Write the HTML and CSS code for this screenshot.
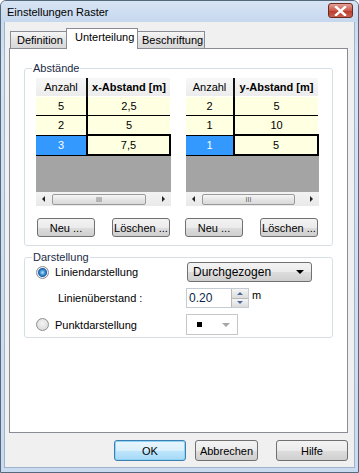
FILE: index.html
```html
<!DOCTYPE html>
<html lang="de">
<head>
    <meta charset="UTF-8">
    <title>Einstellungen Raster</title>
    <link rel="stylesheet" href="styles.css">
</head>
<body>
    <div class="window">
        <div class="titlebar">
            <span class="title">Einstellungen Raster</span>
            <span class="close">
                <svg width="13" height="10" viewBox="0 0 13 10">
                    <path d="M2 1 L11 9 M11 1 L2 9" stroke="#fff" stroke-width="2.4" stroke-linecap="square"/>
                </svg>
            </span>
        </div>

        <div class="client">
            <div class="tabs">
                <div class="tab t-def">Definition</div>
                <div class="tab active">Unterteilung</div>
                <div class="tab t-bes">Beschriftung</div>
            </div>

            <div class="panel">
                <fieldset class="group">
                    <legend>Abstände</legend>
                    <div class="twin">
                        <div class="sheetbox left">
                            <table class="sheet">
                                <tr><th class="c-n">Anzahl</th><th class="c-v">x-Abstand [m]</th></tr>
                                <tr><td class="c-n">5</td><td class="c-v">2,5</td></tr>
                                <tr><td class="c-n">2</td><td class="c-v">5</td></tr>
                                <tr class="last"><td class="c-n cur">3</td><td class="c-v focus">7,5</td></tr>
                            </table>
                            <div class="empty"></div>
                            <div class="hscroll">
                                <span class="arr-l"></span>
                                <span class="thumb"><span class="grip">III</span></span>
                                <span class="arr-r"></span>
                            </div>
                            <div class="btnrow">
                                <button class="btn b-neu">Neu ...</button>
                                <button class="btn b-del">Löschen ...</button>
                            </div>
                        </div>

                        <div class="sheetbox right">
                            <table class="sheet">
                                <tr><th class="c-n">Anzahl</th><th class="c-v">y-Abstand [m]</th></tr>
                                <tr><td class="c-n">2</td><td class="c-v">5</td></tr>
                                <tr><td class="c-n">1</td><td class="c-v">10</td></tr>
                                <tr class="last"><td class="c-n cur">1</td><td class="c-v focus">5</td></tr>
                            </table>
                            <div class="empty"></div>
                            <div class="hscroll">
                                <span class="arr-l"></span>
                                <span class="thumb"><span class="grip">III</span></span>
                                <span class="arr-r"></span>
                            </div>
                            <div class="btnrow">
                                <button class="btn b-neu">Neu ...</button>
                                <button class="btn b-del">Löschen ...</button>
                            </div>
                        </div>
                    </div>
                </fieldset>

                <fieldset class="group g2">
                    <legend>Darstellung</legend>
                    <div class="opts">
                        <label class="radio"><span class="dot on"></span>Liniendarstellung</label>
                        <div class="combo">
                            <span>Durchgezogen</span>
                            <span class="down"></span>
                        </div>

                        <span class="sublabel">Linienüberstand :</span>
                        <div class="spinrow">
                            <div class="spin">
                                <span class="spin-val">0.20</span>
                                <span class="spin-btns">
                                    <span class="sb up"></span>
                                    <span class="sb dn"></span>
                                </span>
                            </div>
                            <span class="unit">m</span>
                        </div>

                        <label class="radio"><span class="dot"></span>Punktdarstellung</label>
                        <div class="mini">
                            <span class="sq"></span>
                            <span class="down grey"></span>
                        </div>
                    </div>
                </fieldset>
            </div>

            <div class="footer">
                <button class="btn big ok">OK</button>
                <button class="btn big cancel">Abbrechen</button>
                <button class="btn big help">Hilfe</button>
            </div>
        </div>
    </div>
</body>
</html>
```

FILE: styles.css
```css
body {
    margin: 0;
    font-family: "Liberation Sans", Arial, sans-serif;
    font-size: 11px;
    color: #000;
    background-color: #fff;
}

.window {
    width: 359px;
    height: 473px;
    box-sizing: border-box;
    border: 1px solid #56687c;
    border-radius: 6px 6px 0 0;
    background: linear-gradient(#c3d6ee, #d4e2f3 60px, #c9dbf0);
    overflow: hidden;
}

.titlebar {
    height: 21px;
    display: flex;
    align-items: center;
    justify-content: space-between;
    padding: 0 5px 0 6px;
    background: linear-gradient(#d7e4f4, #c6d8ee);
}

.title {
    font-size: 11px;
    padding-top: 1px;
}

.close {
    width: 25px;
    height: 15px;
    box-sizing: border-box;
    border: 1px solid #6b2a24;
    border-radius: 3px;
    background: linear-gradient(#e3a196, #cc5a4b 50%, #b63b2b 51%, #c9604e);
    display: flex;
    align-items: center;
    justify-content: center;
    margin-top: -2px;
}

.client {
    margin: 0 3px 4px 3px;
    height: 446px;
    box-sizing: border-box;
    border: 1px solid #9fb3ca;
    border-top: none;
    background-color: #f0f0f0;
    padding: 6px 0 0 4px;
}

/* Karteireiter */
.tabs {
    display: flex;
    align-items: flex-end;
    height: 20px;
    padding-left: 1px;
    position: relative;
    z-index: 1;
}

.tab {
    height: 17px;
    box-sizing: border-box;
    border: 1px solid #898c95;
    border-bottom: none;
    background: linear-gradient(#f6f6f6, #e3e3e3 50%, #d8d8d8);
    padding: 2px 0 0 6px;
    line-height: 13px;
    white-space: nowrap;
}

.t-def { width: 56px; border-right: none; }
.t-bes { width: 67px; border-left: none; padding-left: 4px; }

.tab.active {
    height: 21px;
    width: 72px;
    margin-bottom: -1px;
    background: #fff;
    padding-top: 2px;
    padding-left: 8px;
}

.panel {
    width: 339px;
    height: 385px;
    box-sizing: border-box;
    border: 1px solid #898c95;
    background-color: #fff;
    padding-top: 13px;
}

/* Gruppen */
.group {
    margin: 0 14px;
    padding: 3px 11px 8px 11px;
    border: 1px solid #d5dfe5;
    border-radius: 3px;
}

.group legend {
    margin-left: -4px;
    padding: 0 1px;
    line-height: 13px;
    color: #1b2c46;
}

.g2 {
    margin-top: 5px;
    padding-bottom: 2px;
}

.twin {
    display: flex;
    gap: 15px;
}

.sheetbox.left { width: 135px; }
.sheetbox.right { width: 133px; }

/* Tabelle */
.sheet {
    border-collapse: collapse;
    width: 100%;
    table-layout: fixed;
}

.left .c-n { width: 50px; }
.right .c-n { width: 47px; }

.sheet th, .sheet td {
    padding: 0;
    text-align: center;
    font-size: 11px;
}

.sheet th {
    height: 18px;
    background: linear-gradient(#f7f7f7, #ececec);
    font-weight: normal;
    border-bottom: 1px solid #fff;
}

.sheet th.c-v {
    font-weight: bold;
    border-left: 2px solid #111;
}

.sheet td {
    height: 18px;
    background-color: #ffffe1;
    border-bottom: 1px solid #000;
}

.sheet td.c-v {
    border-left: 2px solid #000;
}

.sheet td.cur {
    background-color: #3399ff;
    color: #fff;
}

.sheet td.focus {
    border: 2px solid #000;
}

.empty {
    height: 36px;
    background-color: #a4a4a4;
}

/* Bildlaufleiste */
.hscroll {
    height: 14px;
    background: linear-gradient(#f3f3f3, #e9e9e9);
    display: flex;
    align-items: center;
}

.arr-l, .arr-r {
    width: 0;
    height: 0;
    border-top: 3px solid transparent;
    border-bottom: 3px solid transparent;
}

.arr-l {
    border-right: 3px solid #222;
    margin: 0 7px 0 6px;
}

.arr-r {
    border-left: 3px solid #222;
    margin: 0 6px 0 auto;
}

.thumb {
    width: 94px;
    height: 11px;
    box-sizing: border-box;
    border: 1px solid #9a9a9a;
    border-radius: 2px;
    background: linear-gradient(#f6f6f6, #e6e6e6 50%, #d9d9d9);
    display: flex;
    align-items: center;
    justify-content: center;
}

.right .thumb { width: 93px; }

.grip {
    font-size: 7px;
    color: #555;
    line-height: 7px;
}

.btnrow {
    display: flex;
    justify-content: space-between;
    margin-top: 12px;
}

/* Knoepfe */
.btn {
    height: 19px;
    box-sizing: border-box;
    border: 1px solid #707070;
    border-radius: 3px;
    background: linear-gradient(#f3f3f3, #ebebeb 50%, #dddddd 51%, #cfcfcf);
    font-family: "Liberation Sans", Arial, sans-serif;
    font-size: 11px;
    padding: 0;
    color: #000;
    white-space: nowrap;
}

.left .b-neu { width: 58px; margin-left: 1px; }
.left .b-del { width: 58px; margin-right: 1px; }
.right .b-neu { width: 58px; margin-left: -1px; }
.right .b-del { width: 58px; margin-right: 1px; }

.btn.big {
    height: 21px;
}

.footer {
    display: flex;
    margin-top: 7px;
    padding-left: 105px;
}

.ok {
    width: 72px;
    border-color: #3c7fb1;
    background: linear-gradient(#eaf6fd, #d9f0fc 50%, #bee6fd 51%, #a7d9f5);
    box-shadow: inset 0 0 0 1px #8fd4f7;
}

.cancel {
    width: 63px;
    margin-left: 9px;
}

.help {
    width: 72px;
    margin-left: 18px;
}

/* Darstellung */
.opts {
    display: grid;
    grid-template-columns: 150px 126px;
    grid-template-rows: 20px 20px 21px;
    row-gap: 6px;
    align-items: center;
    margin-top: -5px;
}

.radio {
    display: flex;
    align-items: center;
    gap: 6px;
}

.dot {
    width: 13px;
    height: 13px;
    box-sizing: border-box;
    border-radius: 50%;
    border: 1px solid #8e8f8f;
    background: radial-gradient(circle at 50% 40%, #f4f4f4, #d4d4d4);
    display: inline-block;
}

.dot.on {
    background: radial-gradient(circle, #b5e1fb 0, #2b82c7 3px, #1b5fa3 4px, #eef 5px, #d6d6d6 6px);
}

.sublabel {
    padding-left: 22px;
}

.combo {
    height: 20px;
    box-sizing: border-box;
    border: 1px solid #707070;
    border-radius: 3px;
    background: linear-gradient(#f3f3f3, #ebebeb 50%, #dddddd 51%, #cfcfcf);
    display: flex;
    align-items: center;
    padding: 0 7px 0 5px;
    font-size: 12px;
    margin-left: 1px;
}

.down {
    width: 0;
    height: 0;
    border-left: 4px solid transparent;
    border-right: 4px solid transparent;
    border-top: 4px solid #000;
    margin-left: auto;
}

.down.grey {
    border-top-color: #a6a6a6;
}

.spinrow {
    display: flex;
    align-items: flex-start;
}

.spin {
    width: 63px;
    height: 20px;
    box-sizing: border-box;
    border: 1px solid #c4cbd3;
    background-color: #fff;
    display: flex;
}

.spin-val {
    flex: 1;
    font-size: 12px;
    line-height: 18px;
    padding-left: 2px;
    color: #0c1f4a;
}

.spin-btns {
    width: 16px;
    display: flex;
    flex-direction: column;
    border-left: 1px solid #b9b9b9;
}

.sb {
    flex: 1;
    background: linear-gradient(#f5f5f5, #dcdcdc);
    display: flex;
    align-items: center;
    justify-content: center;
}

.sb.up { border-bottom: 1px solid #b9b9b9; }

.sb::after {
    content: "";
    width: 0;
    height: 0;
    border-left: 3px solid transparent;
    border-right: 3px solid transparent;
}

.sb.up::after { border-bottom: 3px solid #4a6a9c; }
.sb.dn::after { border-top: 3px solid #4a6a9c; }

.unit {
    margin: 0 0 0 3px;
    line-height: 14px;
}

.mini {
    width: 52px;
    height: 21px;
    box-sizing: border-box;
    border: 1px solid #c6c6c6;
    background-color: #fff;
    display: flex;
    align-items: center;
    padding: 0 7px 0 10px;
}

.sq {
    width: 5px;
    height: 5px;
    background-color: #000;
}
```
